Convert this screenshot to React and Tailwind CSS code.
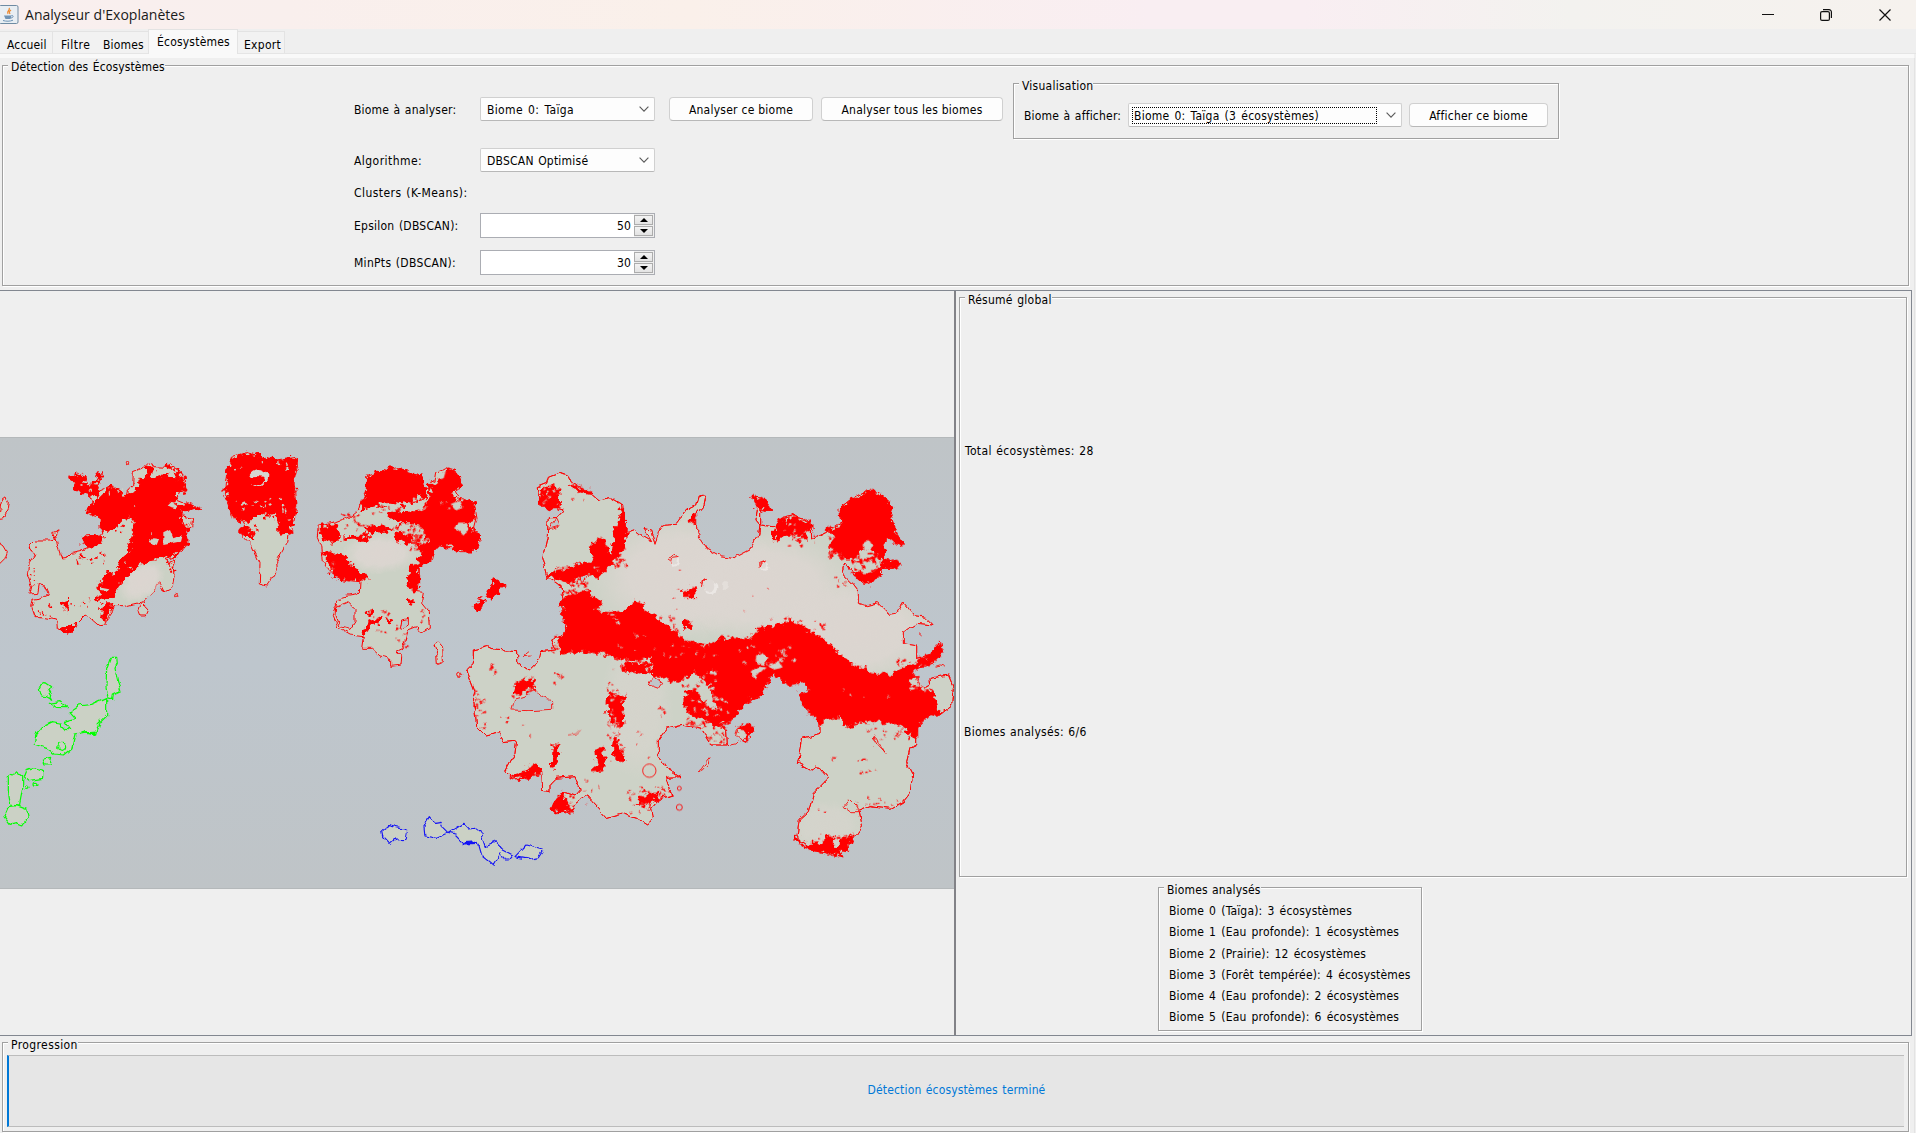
import React from "react";

const SEA = "#bfc5c9";
const RED = "#ff0000";

/* ---------- small building blocks ---------- */
function Group({ title, className, titleClass = "leading-[18px]", children }) {
  return (
    <div className={"relative border border-[#a0a0a0] shadow-[1px_1px_0_#fff,inset_1px_1px_0_#fff] " + className}>
      <span className={"absolute left-[5px] -top-[7px] h-[16px] bg-[#efefef] pl-[3px] whitespace-nowrap " + titleClass}>{title}</span>
      {children}
    </div>
  );
}

function Combo({ className, focus, children }) {
  return (
    <div className={"flex h-[24px] items-center justify-between rounded-[2px] border border-[#d0d0d0] border-b-[#b8b8b8] bg-[#fdfdfd] pr-[5px] " + className}>
      {focus ? (
        <span className="ml-[3px] h-[17px] w-[245px] border border-dotted border-black pl-px leading-[17px] tracking-[0.25px] [word-spacing:1.4px] whitespace-nowrap">{children}</span>
      ) : (
        <span className="pl-[6px] pt-px whitespace-nowrap">{children}</span>
      )}
      <svg width="10" height="6" viewBox="0 0 10 6" fill="none" stroke="#5a5a5a" strokeWidth="1.1"><path d="M.6.6 5 5.2 9.4.6" /></svg>
    </div>
  );
}

function Btn({ className, children }) {
  return (
    <button className={"h-[24px] rounded-[4px] border border-[#d0d0d0] border-b-[#b8b8b8] bg-[#fdfdfd] pt-px text-center tracking-[0.25px] whitespace-nowrap " + className}>{children}</button>
  );
}

function Arrow({ up }) {
  return (
    <span className="flex h-[10px] items-center justify-center border border-[#acacac] bg-gradient-to-b from-[#f3f3f3] to-[#e3e3e3]">
      <svg width="8" height="4" viewBox="0 0 8 4"><path d={up ? "M4 0 8 4H0Z" : "M0 0H8L4 4Z"} fill="#000" /></svg>
    </span>
  );
}

function Spinner({ value, className }) {
  return (
    <div className={"flex h-[25px] w-[175px] border border-[#abadb3] bg-[#efefef] " + className}>
      <span className="flex-1 bg-white pr-[3px] text-right leading-[24px]">{value}</span>
      <span className="flex w-[20px] flex-col justify-center gap-px pr-px"><Arrow up /><Arrow /></span>
    </div>
  );
}

/* ---------- map ---------- */
const poly = (s) => "M" + s + "Z";

function specks(seed, list) {
  let s = seed;
  const r = () => ((s = (s * 16807) % 2147483647) / 2147483647);
  const out = [];
  list.forEach(([x, y, w, h, n, size]) => {
    let d = "";
    for (let i = 0; i < n; i++) {
      const px = x + r() * w;
      const py = y + r() * h;
      const a = 2 + r() * size;
      const b = 2 + r() * size;
      d += `M${px.toFixed(0)},${py.toFixed(0)}l${a.toFixed(0)},${(-b / 2).toFixed(0)}l${(a / 2).toFixed(0)},${b.toFixed(0)}l${(-a).toFixed(0)},${(b / 2).toFixed(0)}z`;
    }
    out.push(d);
  });
  return out.join("");
}

const WEST = [
  "90,345 105,330 150,330 167,327 158,308 180,298 166,312 172,345 185,387 200,385 215,370 240,365 265,355 255,345 255,318 300,315 310,300 300,262 262,250 260,240 285,215 265,205 280,190 330,168 360,185 380,205 385,180 398,170 400,125 425,115 440,102 460,110 500,112 510,100 520,112 545,125 555,150 560,182 535,185 530,210 560,222 592,235 545,240 550,258 578,265 575,290 560,300 560,350 520,380 495,388 520,410 522,440 515,475 495,485 480,455 470,462 460,490 430,515 400,522 370,530 345,530 325,560 318,585 300,587 280,570 255,555 230,580 215,600 195,608 172,595 170,570 120,560 105,560 95,530 100,510 120,508 148,495 135,465 115,462 110,490 90,492 95,470 82,435 88,400 105,375 92,355",
  "694,82 740,68 780,78 830,90 892,82 892,110 882,150 888,240 875,305 865,315 860,340 830,395 832,420 800,468 778,462 780,400 755,345 735,325 715,305 735,290 724,270 694,260 684,225 676,190 684,120",
  "-5,265 2,225 8,202 18,198 25,215 22,240 8,264",
  "-5,335 12,348 22,365 15,385 -5,405",
  "424,520 436,518 437,532 444,540 436,558 420,558 415,545",
];
const WEST_RED = [
  "285,215 330,170 360,185 380,205 385,195 412,180 418,150 440,140 470,145 500,130 510,145 548,150 560,182 528,185 530,215 510,230 560,222 595,235 545,240 540,275 560,280 560,350 520,378 470,388 430,395 400,420 360,460 335,500 290,515 305,490 290,465 320,435 350,430 360,400 385,365 395,330 400,265 370,270 330,300 305,300 300,265 260,245",
  "250,318 310,318 305,342 250,345",
  "308,525 338,525 320,572 302,560",
  "440,104 460,110 455,140 440,135",
  "505,102 520,112 545,125 550,148 525,145 520,120 500,115",
  "190,515 208,508 200,545 190,540",
  "172,595 215,592 230,580 215,602 195,609",
  "696,84 740,70 780,80 830,92 892,84 890,110 882,150 888,240 872,308 838,312 832,260 765,255 750,275 724,270 696,260 686,225 678,190 686,120",
  "718,298 735,290 750,305 755,322 738,322",
];
const CENTRE = [
  "55,285 110,275 150,260 180,235 190,195 200,180 200,140 240,125 285,112 310,122 365,140 370,175 385,180 390,155 405,160 410,130 440,113 465,120 485,165 465,180 480,205 518,212 528,265 520,295 540,325 520,365 480,365 455,350 405,350 395,390 355,405 355,460 350,485 370,487 365,520 385,545 388,595 360,612 350,590 325,600 310,650 290,660 305,680 303,708 272,712 272,685 240,678 215,655 185,655 190,620 150,615 115,595 100,560 110,520 130,498 178,490 180,455 130,450 95,430 70,395 65,350 52,320",
  "402,645 415,636 428,650 430,695 412,703 410,670",
];
const CENTRE_RED = [
  "200,140 240,125 285,112 310,122 365,140 370,175 380,185 375,205 350,195 335,225 270,215 220,228 178,245 200,200",
  "262,250 370,240 380,215 395,185 390,155 412,165 422,140 445,115 465,120 485,165 465,180 455,205 475,210 500,215 518,212 528,265 500,275 520,300 540,325 520,365 480,365 455,350 405,350 395,390 355,405 355,460 345,485 322,470 332,410 360,395 370,365 345,345 390,340 372,305 365,280 300,280 270,270",
  "65,290 108,285 115,320 100,335 68,330",
  "72,370 110,370 135,380 155,410 180,425 200,452 170,445 150,452 110,445 95,430 92,400",
  "200,295 240,285 278,300 235,305 205,312",
  "130,322 205,318 200,330 130,330",
  "290,310 340,325 325,340 292,330",
  "190,605 205,580 245,560 235,575 215,582 195,612",
  "558,485 575,465 580,445 588,443 597,460 617,467 597,478 594,498 568,503",
  "523,525 540,507 558,515 540,541 525,537",
  "205,545 218,542 212,558",
  "322,510 338,515 333,525",
  "262,568 276,572 268,580",
];
const EAST =
  "55,170 80,160 85,142 115,130 145,137 158,165 200,180 235,210 270,203 308,225 315,305 345,300 370,320 395,335 372,296 392,300 405,340 415,310 430,283 470,280 500,240 530,225 538,198 552,194 556,205 552,225 530,250 530,310 560,355 600,378 645,383 690,360 715,320 720,285 708,270 712,240 697,200 725,205 750,238 722,240 722,285 760,290 790,265 820,258 870,275 872,330 920,305 965,275 962,235 1000,205 1040,180 1075,190 1105,215 1115,270 1145,345 1100,320 1085,350 1090,385 1138,400 1120,415 1085,415 1080,440 1035,460 1000,430 975,400 965,430 1000,465 1015,485 1015,520 1040,527 1075,518 1110,553 1130,550 1150,517 1185,560 1220,565 1240,585 1190,580 1150,605 1150,638 1190,645 1190,685 1240,670 1260,640 1265,665 1235,700 1180,715 1165,745 1190,740 1195,765 1215,775 1232,765 1230,745 1285,735 1300,770 1295,825 1260,852 1225,855 1190,890 1190,945 1170,955 1160,995 1178,1030 1170,1090 1150,1115 1110,1138 1050,1130 1015,1145 1025,1190 990,1240 960,1275 880,1262 830,1225 838,1170 865,1145 880,1090 925,1045 890,1005 870,1020 835,1000 848,925 900,910 900,870 860,835 840,795 870,790 860,755 805,762 760,725 740,760 720,800 680,810 650,845 635,870 600,880 620,905 622,945 575,945 545,895 490,883 440,895 415,930 415,975 440,1015 480,1040 440,1042 458,1095 420,1105 395,1135 400,1165 380,1185 350,1165 305,1150 260,1163 230,1130 200,1098 165,1125 150,1150 95,1130 110,1105 140,1085 165,1095 180,1078 165,1040 105,1045 90,1060 90,1085 68,1080 65,1020 10,1045 -25,1047 -45,1025 -15,970 -10,930 -50,935 -60,905 -105,915 -130,890 -140,800 -135,785 -160,720 -140,700 -140,660 -100,650 -80,660 -10,665 -10,695 25,720 55,690 60,665 110,660 95,630 130,615 140,580 125,525 135,480 85,445 68,380 82,320 85,260 110,260 130,240 60,220";
const EAST_RED = [
  "125,525 145,487 205,480 220,505 245,520 215,545 270,550 310,545 345,520 370,520 372,545 430,580 490,630 560,650 610,625 690,632 725,590 760,595 810,570 870,605 920,640 1000,710 1060,730 1120,735 1190,695 1240,670 1260,640 1265,665 1235,700 1180,715 1165,760 1235,790 1255,850 1225,855 1190,890 1180,920 1150,885 1100,875 1020,875 975,890 960,860 900,875 860,835 840,795 870,790 860,755 805,762 760,725 740,760 720,800 680,810 650,845 635,870 600,865 590,820 570,790 575,735 560,760 520,720 480,755 400,735 395,680 320,690 250,670 190,660 130,670 115,645 140,600",
  "918,300 965,290 962,235 1000,205 1030,200 1040,180 1075,190 1105,215 1115,270 1125,310 1145,345 1095,320 1090,388 1068,375 1055,358 1020,362 1000,385 980,385 960,365 930,350 950,320",
  "1080,400 1105,390 1138,402 1120,415 1092,412",
  "1000,430 1060,430 1085,415 1078,440 1035,460",
  "278,372 285,320 305,235 315,260 312,350 290,385",
  "212,350 235,328 250,335 268,372 288,378 268,405 240,442 205,436 192,410 225,388",
  "85,440 110,420 145,415 185,405 205,425 190,440 150,455 120,448",
  "58,215 70,175 100,172 118,185 115,230 85,240",
  "150,165 200,180 215,195 165,178",
  "765,300 775,275 790,270 800,290 818,258 835,275 870,280 872,300 855,300 862,325 830,312 800,310 765,330",
  "697,200 725,205 750,238 720,240",
  "-20,1040 10,1025 55,1005 62,1030 30,1035 -5,1047",
  "98,945 115,950 112,1000 96,1012",
  "232,955 250,955 250,1018 218,1020 235,990",
  "265,790 318,800 305,825 310,880 275,875 262,850",
  "285,930 300,960 310,990 280,985",
  "310,705 385,700 365,730 320,722",
  "490,485 520,475 525,500 490,500",
  "495,572 512,578 515,595 495,590",
  "500,780 540,795 560,830 600,850 640,850 635,872 595,885 545,865 500,845",
  "350,1120 380,1095 415,1090 410,1108 385,1125",
  "850,1245 890,1240 900,1255 920,1220 940,1225 935,1250 955,1255 970,1230 998,1215 985,1245 960,1275 880,1262",
  "-10,760 30,750 45,765 10,780 -15,800",
  "95,1130 115,1105 128,1090 135,1120 155,1140 115,1145",
  "655,895 692,880 697,905 672,930 690,900",
  "826,1215 842,1240 828,1228",
  "516,255 528,262 525,280 516,275",
];
const EAST_LINES = [
  "452,400 445,388 460,375 480,382 455,385 452,398",
  "545,470 540,462 560,448 548,458",
  "718,412 716,400 738,392 722,400",
  "535,1028 550,1005 570,980 565,1000 545,1022",
  "1060,918 1075,945 1098,970 1088,958 1072,925",
  "970,1130 988,1108 1000,1120 1010,1130 1018,1145 990,1145",
];
const GREEN = [
  "325,808 318,770 320,715 332,682 350,682 352,700 345,715 355,760 362,785 340,795 338,808",
  "210,845 235,828 275,823 320,803 320,855 300,875 290,912 260,905 225,912 215,955 190,975 165,972 140,955 102,942 108,915 130,890 155,878 180,882 195,898 212,900 192,875 228,865",
  "115,780 122,765 138,758 155,770 145,785 158,808 140,797 125,795",
  "148,820 180,815 202,833 172,832",
  "130,990 155,985 150,1002 135,1002",
  "72,1040 80,1020 100,1013 128,1020 128,1045 85,1052",
  "25,1040 48,1025 68,1040 68,1075 58,1128 32,1125 25,1085",
  "12,1160 25,1130 50,1127 80,1138 85,1160 68,1185 50,1178 30,1183",
];
const BLUE = [
  "245,1205 265,1187 320,1200 315,1228 285,1230 270,1243 248,1220",
  "372,1190 388,1163 402,1180 420,1177 428,1195 443,1210 410,1225 375,1218",
  "445,1210 492,1180 508,1197 525,1195 540,1205 555,1248 585,1235 610,1260 638,1275 625,1290 610,1290 600,1268 580,1303 545,1275 535,1240 490,1240 465,1215",
  "645,1280 678,1245 730,1260 715,1283 690,1288",
];

function Map() {
  return (
    <svg className="block" width="954" height="452" viewBox="0 0 954 452">
      <defs>
        <linearGradient id="sea" x1="0" y1="0" x2="0" y2="1">
          <stop offset="0" stopColor="#bfc4c7" />
          <stop offset=".5" stopColor="#bec6cd" />
          <stop offset="1" stopColor="#bfc4c7" />
        </linearGradient>
        <radialGradient id="warm"><stop offset="0" stopColor="#dcd5d0" /><stop offset=".6" stopColor="#dcd6d1" stopOpacity=".9" /><stop offset="1" stopColor="#dcd6d0" stopOpacity="0" /></radialGradient>
        <filter id="coast" x="-5%" y="-5%" width="110%" height="110%" colorInterpolationFilters="sRGB">
          <feTurbulence type="fractalNoise" baseFrequency=".12" numOctaves="2" seed="4" />
          <feDisplacementMap in="SourceGraphic" scale="6" xChannelSelector="R" yChannelSelector="G" />
        </filter>
        <filter id="rough" x="-5%" y="-5%" width="110%" height="110%" colorInterpolationFilters="sRGB">
          <feTurbulence type="fractalNoise" baseFrequency=".16" numOctaves="3" seed="9" />
          <feDisplacementMap in="SourceGraphic" scale="11" xChannelSelector="R" yChannelSelector="G" />
        </filter>
        <clipPath id="eastClip"><path d={poly(EAST)} /></clipPath>
      </defs>
      <rect width="954" height="452" fill="url(#sea)" />

      <g filter="url(#coast)" strokeLinejoin="round">
        <g transform="scale(.33333) translate(0 -21)" stroke={RED} strokeWidth="3" fill="#cbd1c5">
          {WEST.map((p) => <path key={p} d={poly(p)} />)}
          <ellipse cx="425" cy="455" rx="80" ry="50" transform="rotate(-35 425 455)" fill="url(#warm)" stroke="none" />
          <circle cx="384" cy="95" r="5" /><circle cx="527" cy="496" r="3" /><circle cx="515" cy="400" r="10" />
          <g stroke="#00ff00" strokeWidth="3.6">
            {GREEN.map((p) => <path key={p} d={poly(p)} />)}
            <circle cx="82" cy="1073" r="5" /><circle cx="105" cy="1063" r="6" /><circle cx="185" cy="952" r="12" />
            <path d="M250,906 285,903 288,914Z M290,880 300,870" fill="#00ff00" />
          </g>
        </g>
        <g transform="scale(.33333) translate(900 -21)" stroke={RED} strokeWidth="3" fill="#cbd1c5">
          {CENTRE.map((p) => <path key={p} d={poly(p)} />)}
          <ellipse cx="240" cy="370" rx="115" ry="60" fill="url(#warm)" stroke="none" />
          <path d="M110,530 145,515 165,535 165,575 150,598 120,590 108,560Z" fill={SEA} />
          <path d="M300,600 305,570 325,565 325,585Z" fill={SEA} />
          <circle cx="476" cy="736" r="6" />
          <g stroke="#1414f5" strokeWidth="3.4">
            {BLUE.map((p) => <path key={p} d={poly(p)} />)}
            <path d="M490,1232 515,1230 530,1240 492,1242Z" fill="#1414f5" />
          </g>
        </g>
        <g transform="scale(.33333) translate(1560 -21)" stroke={RED} strokeWidth="2.6" fill="#cdd2c7">
          <path d={poly(EAST)} />
          <g clipPath="url(#eastClip)" stroke="none" fill="url(#warm)">
            <ellipse cx="500" cy="440" rx="290" ry="190" />
            <ellipse cx="720" cy="470" rx="290" ry="170" />
            <ellipse cx="1000" cy="600" rx="260" ry="160" />
            <ellipse cx="350" cy="830" rx="110" ry="220" opacity=".5" />
            <ellipse cx="920" cy="1190" rx="110" ry="80" opacity=".5" />
          </g>
          <path d={poly(EAST)} fill="none" />
          <path d="M-28,840 -20,812 20,800 20,782 45,778 60,800 98,810 98,838 30,842Z" fill={SEA} />
          <path d="M388,765 400,740 425,760 415,775Z M165,400 190,405 205,440 185,455Z M110,260 85,300 120,290Z" fill={SEA} />
          <g stroke="none" fill="#ebe7e4"><circle cx="462" cy="392" r="15" /><circle cx="572" cy="472" r="20" /><circle cx="735" cy="409" r="13" /><circle cx="618" cy="468" r="12" opacity=".5" /></g>
          <g stroke="none" fill="#dfd9d5"><circle cx="459" cy="388" r="13" /><circle cx="568" cy="467" r="18" /><circle cx="731" cy="405" r="11" /></g>
          {EAST_LINES.map((p) => <path key={p} d={poly(p)} />)}
          <path d="M650,915 655,893 692,883 695,905 668,935Z M1250,712 1262,708 1275,712 M1196,610 1205,618 M30,665 10,680 35,678 M630,945 645,942 652,935" />
        </g>
      </g>
      <g transform="scale(.33333) translate(1560 -21)" stroke={RED} strokeWidth="2.6" fill="none">
        <circle cx="388" cy="1022" r="20" /><circle cx="478" cy="1132" r="9" /><circle cx="478" cy="1075" r="6" />
      </g>

      <g filter="url(#rough)" fill={RED} stroke={RED} strokeLinejoin="round">
        <g transform="scale(.33333) translate(0 -21)" strokeWidth="4">
          <path d={WEST_RED.map(poly).join("")} />
          <path d="M208,140 235,132 250,140 262,158 280,160 300,128 304,150 285,165 300,178 285,200 262,190 248,192 238,180 222,175Z" />
        </g>
        <g transform="scale(.33333) translate(900 -21)" strokeWidth="5"><path d={CENTRE_RED.map(poly).join("")} /></g>
        <g transform="scale(.33333) translate(1560 -21)" strokeWidth="7"><path d={EAST_RED.map(poly).join("")} /></g>
      </g>

      <g filter="url(#coast)">
        <g transform="scale(.33333) translate(0 -21)">
          <path fill="#ccd1c6" d={"M500,230 512,218 535,228 530,238Z M448,335 460,322 478,325 470,345Z M490,310 510,300 520,325 545,315 540,335 490,345Z M300,470 325,475 318,482 300,480Z M548,262 575,268 555,285Z" + specks(7, [[455, 112, 85, 25, 9, 7], [215, 140, 75, 45, 14, 7], [285, 170, 90, 30, 6, 5], [370, 200, 130, 120, 4, 3], [695, 90, 180, 30, 7, 5], [695, 205, 150, 50, 20, 7], [840, 235, 35, 70, 6, 7], [355, 380, 50, 40, 3, 4]])} />
          <path d="M748,140 C752,118 790,112 805,135 C806,165 775,178 752,160 L778,165 C792,160 800,150 792,140 L770,138Z" fill="#d5d6d0" />
          <path fill={RED} d={specks(31, [[225, 365, 95, 40, 16, 6], [300, 260, 70, 50, 10, 7], [85, 350, 20, 140, 8, 5], [95, 520, 60, 40, 10, 5], [205, 505, 70, 35, 6, 4], [500, 385, 25, 40, 6, 4], [735, 270, 30, 50, 10, 5]])} />
        </g>
        <g transform="scale(.33333) translate(900 -21)">
          <path fill="#cdd1c7" d={"M462,295 475,278 500,278 508,298 490,312Z M455,222 480,212 490,232 470,238Z M422,130 438,118 430,145 412,150Z" + specks(17, [[335, 195, 45, 45, 14, 7], [410, 205, 90, 50, 5, 4], [70, 330, 55, 35, 10, 7], [85, 395, 20, 30, 4, 6], [330, 280, 60, 60, 12, 6]])} />
          <path fill={RED} d={specks(23, [[120, 250, 80, 60, 16, 6], [210, 225, 80, 30, 10, 6], [270, 280, 110, 50, 26, 8], [320, 335, 60, 25, 10, 6], [120, 390, 40, 30, 4, 5], [180, 540, 80, 70, 8, 6], [285, 570, 35, 85, 10, 5], [355, 490, 20, 90, 6, 4]])} />
        </g>
        <g transform="scale(.33333) translate(1560 -21)">
          <path fill="#d0d1c9" d={"M708,680 725,668 742,682 730,705 710,700Z M695,725 712,710 740,712 705,745Z M745,705 775,695 785,712 760,720Z M1028,340 1045,330 1058,350 1045,362 1030,355Z" + specks(51, [[1000, 375, 75, 45, 8, 8], [60, 175, 60, 60, 9, 6], [135, 455, 60, 40, 14, 8], [250, 545, 60, 40, 4, 8], [280, 600, 140, 60, 7, 4], [400, 640, 200, 40, 12, 5], [540, 720, 40, 70, 14, 8], [620, 640, 190, 60, 12, 6], [760, 640, 60, 50, 8, 7], [930, 740, 200, 70, 4, 3], [500, 790, 120, 70, 24, 9], [260, 790, 50, 80, 10, 6], [270, 370, 45, 30, 8, 6], [200, 400, 50, 30, 3, 5], [770, 280, 100, 35, 5, 5], [1165, 750, 55, 30, 12, 14]])} />
          <path fill={RED} d={specks(73, [[300, 675, 90, 50, 20, 8], [475, 720, 110, 60, 16, 7], [255, 720, 45, 70, 10, 4], [255, 870, 50, 60, 14, 6], [270, 930, 40, 60, 10, 5], [495, 845, 130, 50, 24, 8], [560, 890, 55, 50, 10, 6], [925, 320, 60, 60, 24, 10], [985, 370, 90, 75, 40, 11], [940, 410, 40, 60, 6, 4], [800, 300, 80, 55, 14, 7], [400, 555, 70, 50, 20, 7], [780, 560, 140, 40, 14, 6], [610, 610, 140, 30, 14, 6], [1110, 690, 80, 50, 14, 7], [1040, 880, 140, 50, 26, 5], [1010, 950, 60, 90, 8, 5], [930, 980, 15, 10, 3, 5], [1000, 1100, 140, 30, 14, 4], [850, 1220, 130, 40, 22, 6], [320, 1070, 130, 40, 22, 6], [330, 1120, 60, 40, 6, 5], [-30, 740, 70, 60, 14, 6], [-140, 780, 30, 130, 16, 6], [-60, 860, 40, 30, 4, 5], [100, 1090, 60, 55, 14, 6], [180, 1030, 60, 100, 8, 3], [90, 730, 35, 45, 6, 5], [120, 450, 80, 50, 24, 8], [265, 350, 50, 60, 20, 8], [90, 610, 50, 60, 16, 6], [440, 300, 80, 250, 5, 3], [-100, 700, 40, 25, 5, 6], [150, 160, 50, 60, 6, 4], [340, 870, 70, 120, 5, 3], [880, 1130, 50, 80, 3, 4], [640, 430, 120, 150, 4, 2], [410, 830, 20, 30, 4, 5], [0, 880, 30, 40, 2, 5]])} />
          <path fill="none" stroke={RED} strokeWidth="2" d="M145,915 170,912 182,900 M590,905 605,925 M500,870 520,885 545,885" />
        </g>
      </g>
      <path d="M0 .5H954" stroke="#b4b8ba" />
      <path d="M0 451.5H954" stroke="#b4b8ba" />
    </svg>
  );
}

/* ---------- page ---------- */
const BIOMES = [
  "Biome 0 (Taïga): 3 écosystèmes",
  "Biome 1 (Eau profonde): 1 écosystèmes",
  "Biome 2 (Prairie): 12 écosystèmes",
  "Biome 3 (Forêt tempérée): 4 écosystèmes",
  "Biome 4 (Eau profonde): 2 écosystèmes",
  "Biome 5 (Eau profonde): 6 écosystèmes",
];

export default function App() {
  return (
    <div className="flex h-[1133px] w-[1916px] flex-col overflow-hidden bg-[#efefef] font-['DejaVu_Sans_Condensed','DejaVu_Sans',sans-serif] text-[12px] tracking-[0.15px] [word-spacing:0.8px] text-black [font-stretch:condensed]">
      <header className="flex h-[29px] shrink-0 items-center bg-[linear-gradient(90deg,#f9efef_0%,#f9efed_15%,#faf0ea_36%,#f9eef2_60%,#f9eef2_68%,#f3f2ef_82%,#f6f2ee_100%)]">
        <svg width="19" height="19" viewBox="0 0 19 19" className="-mt-px">
          <rect x="-1" y=".5" width="19" height="18" rx="1.5" fill="#e9eef3" stroke="#6f8ba3" />
          <path d="M9 3C11 5 6 6 8 9M11 5C9 6.500 9 7 10 9" stroke="#ec8a32" strokeWidth="1.300" fill="none" />
          <path d="M4 10.500H11.500L10.500 14H5.500Z" fill="#6f93b5" />
          <path d="M11.500 10.500C14 10 13.500 13 10.800 13M3 15.500C6 16.500 10 16.500 13 15.200" stroke="#6f93b5" fill="none" />
        </svg>
        <h1 className="ml-[6px] w-[170px] font-['Open_Sans',sans-serif] text-[14px] tracking-[0.03px] [word-spacing:0] whitespace-nowrap text-[#1a1a1a] [font-stretch:normal]">Analyseur d'Exoplanètes</h1>
        <div className="ml-auto flex items-center pr-[25px]">
          <svg width="12" height="12" viewBox="0 0 12 12" className="mr-[46px]"><path d="M0 5.500H12" stroke="#111" /></svg>
          <svg width="12" height="12" viewBox="0 0 12 12" fill="none" stroke="#111" strokeWidth="1.200" className="mr-[47px]"><rect x=".6" y="2.600" width="8.800" height="8.800" rx="1.500" /><path d="M3 .6H9A2.400 2.400 0 0 1 11.400 3V9" /></svg>
          <svg width="12" height="12" viewBox="0 0 12 12" stroke="#111" strokeWidth="1.200"><path d="M.5.500 11.500 11.500M11.500.500.500 11.500" /></svg>
        </div>
      </header>

      <nav className="flex h-[25px] shrink-0 items-end border-b border-[#e5e5e5]">
        <span className="h-[22px] w-[53px] border-t border-r border-[#e3e3e3] bg-[#f2f2f2] pl-[7px] leading-[26px]">Accueil</span>
        <span className="h-[22px] w-[41px] border-t border-[#e3e3e3] bg-[#f2f2f2] pl-[8px] leading-[26px] tracking-[0.5px]">Filtre</span>
        <span className="h-[22px] w-[54px] border-t border-[#e3e3e3] bg-[#f2f2f2] pl-[9px] leading-[26px]">Biomes</span>
        <span className="relative -mb-px h-[25px] w-[90px] border border-b-0 border-[#e3e3e3] bg-[#f9f9f9] pl-[8px] leading-[24px] tracking-[0.2px]">Écosystèmes</span>
        <span className="h-[22px] w-[47px] border-t border-r border-[#e3e3e3] bg-[#f2f2f2] pl-[6px] leading-[26px] tracking-[0.3px]">Export</span>
      </nav>
      <div className="h-[4px] w-[1914px] shrink-0 bg-[#f9f9f9]" />

      <div className="mr-px flex min-h-0 flex-1 flex-col border-r border-[#e3e3e3]">
        <Group title="Détection des Écosystèmes" titleClass="leading-[16px] tracking-[0.12px]" className="ml-[2px] mt-[7px] h-[221px] w-[1907px] shrink-0">
          <div className="flex">
            <div className="ml-[351px] mt-[31px] grid w-[301px] grid-cols-[126px_175px]">
              <span className="h-[24px] leading-[26px] tracking-[0.2px]">Biome à analyser:</span><Combo className="tracking-[0.35px] [word-spacing:1.4px]">Biome 0: Taïga</Combo>
              <span className="mt-[27px] h-[24px] leading-[26px] tracking-[0.45px]">Algorithme:</span><Combo className="mt-[27px] tracking-[0.22px]">DBSCAN Optimisé</Combo>
              <span className="mt-[8px] h-[24px] leading-[26px] tracking-[0.45px]">Clusters (K-Means):</span><span />
              <span className="mt-[9px] h-[25px] leading-[27px] tracking-[0.24px]">Epsilon (DBSCAN):</span><Spinner value="50" className="mt-[9px]" />
              <span className="mt-[12px] h-[25px] leading-[27px] tracking-[0.3px]">MinPts (DBSCAN):</span><Spinner value="30" className="mt-[12px]" />
            </div>
            <Btn className="ml-[14px] mt-[31px] w-[144px]">Analyser ce biome</Btn>
            <Btn className="ml-[8px] mt-[31px] w-[182px]">Analyser tous les biomes</Btn>
            <Group title="Visualisation" className="ml-[10px] mt-[17px] flex h-[56px] w-[546px] items-start pt-[19px]" titleClass="leading-[18px] tracking-[0.25px]">
              <span className="ml-[10px] w-[104px] leading-[26px] tracking-[0.2px] whitespace-nowrap">Biome à afficher:</span>
              <Combo focus className="w-[274px]">Biome 0: Taïga (3 écosystèmes)</Combo>
              <Btn className="ml-[7px] w-[139px]">Afficher ce biome</Btn>
            </Group>
          </div>
        </Group>

        <main className="mt-[4px] flex h-[746px] w-[1912px] shrink-0 border-y border-r border-[#828790]">
          <section className="flex w-[956px] flex-col justify-center border-r-2 border-[#828287]"><Map /></section>
          <section className="flex flex-1 flex-col">
            <Group title="Résumé global" className="ml-[3px] mt-[6px] h-[580px] w-[948px]" titleClass="leading-[18px] tracking-[0.25px]">
              <div className="flex h-full flex-col pl-[4px]">
                <span className="mt-[145px] pl-px leading-[16px] tracking-[0.35px]">Total écosystèmes: 28</span>
                <span className="mt-[265px] leading-[16px] tracking-[0.3px]">Biomes analysés: 6/6</span>
              </div>
            </Group>
            <Group title="Biomes analysés" className="ml-[202px] mt-[10px] h-[144px] w-[264px]">
              <ul className="flex flex-col pl-[10px] pt-[12px] tracking-[0.17px] [word-spacing:1.500px]">
                {BIOMES.map((b) => <li key={b} className="h-[21.300px] leading-[23px] whitespace-nowrap">{b}</li>)}
              </ul>
            </Group>
          </section>
        </main>

        <Group title="Progression" className="ml-[2px] mt-[6px] h-[90px] w-[1907px] shrink-0 px-[4px] pt-[12px]" titleClass="leading-[18px] tracking-[0.4px]">
          <div className="flex h-[72px] items-center justify-center border-y border-[#bcbcbc] border-l-2 border-l-[#0078d7] bg-[#e6e6e6] pb-[2px] text-[#0078d7]">Détection écosystèmes terminé</div>
        </Group>
      </div>
    </div>
  );
}
